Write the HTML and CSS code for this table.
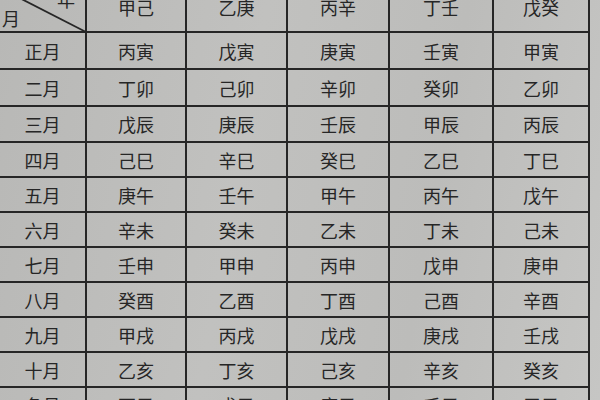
FILE: index.html
```html
<!DOCTYPE html>
<html lang="zh">
<head>
<meta charset="utf-8">
<link rel="stylesheet" href="styles.css">
</head>
<body>
<div class="paper">
  <div class="table">
    <div class="cell head corner">
      <svg class="diag" width="87" height="45" viewBox="0 0 87 45"><line x1="0" y1="0" x2="86" y2="44" stroke="#262626" stroke-width="1.8"/></svg>
      <span class="nian">年</span>
      <span class="yue">月</span>
    </div>
    <div class="cell head"><span>甲己</span></div>
    <div class="cell head"><span>乙庚</span></div>
    <div class="cell head"><span>丙辛</span></div>
    <div class="cell head"><span>丁壬</span></div>
    <div class="cell head"><span>戊癸</span></div>

    <div class="cell">正月</div><div class="cell">丙寅</div><div class="cell">戊寅</div><div class="cell">庚寅</div><div class="cell">壬寅</div><div class="cell">甲寅</div>
    <div class="cell">二月</div><div class="cell">丁卯</div><div class="cell">己卯</div><div class="cell">辛卯</div><div class="cell">癸卯</div><div class="cell">乙卯</div>
    <div class="cell">三月</div><div class="cell">戊辰</div><div class="cell">庚辰</div><div class="cell">壬辰</div><div class="cell">甲辰</div><div class="cell">丙辰</div>
    <div class="cell">四月</div><div class="cell">己巳</div><div class="cell">辛巳</div><div class="cell">癸巳</div><div class="cell">乙巳</div><div class="cell">丁巳</div>
    <div class="cell">五月</div><div class="cell">庚午</div><div class="cell">壬午</div><div class="cell">甲午</div><div class="cell">丙午</div><div class="cell">戊午</div>
    <div class="cell">六月</div><div class="cell">辛未</div><div class="cell">癸未</div><div class="cell">乙未</div><div class="cell">丁未</div><div class="cell">己未</div>
    <div class="cell">七月</div><div class="cell">壬申</div><div class="cell">甲申</div><div class="cell">丙申</div><div class="cell">戊申</div><div class="cell">庚申</div>
    <div class="cell">八月</div><div class="cell">癸酉</div><div class="cell">乙酉</div><div class="cell">丁酉</div><div class="cell">己酉</div><div class="cell">辛酉</div>
    <div class="cell">九月</div><div class="cell">甲戌</div><div class="cell">丙戌</div><div class="cell">戊戌</div><div class="cell">庚戌</div><div class="cell">壬戌</div>
    <div class="cell">十月</div><div class="cell">乙亥</div><div class="cell">丁亥</div><div class="cell">己亥</div><div class="cell">辛亥</div><div class="cell">癸亥</div>
    <div class="cell">冬月</div><div class="cell">丙子</div><div class="cell">戊子</div><div class="cell">庚子</div><div class="cell">壬子</div><div class="cell">甲子</div>
  </div>
</div>
</body>
</html>
```

FILE: styles.css
```css
html, body {
  margin: 0;
  padding: 0;
  width: 600px;
  height: 400px;
  overflow: hidden;
}
body {
  background: linear-gradient(100deg, #b8b8b6 0%, #c1c1bf 40%, #bcbcba 70%, #c6c6c4 100%);
  font-family: "Noto Sans CJK SC", "Noto Sans CJK JP", sans-serif;
  color: #262626;
}
.paper {
  width: 600px;
  height: 400px;
  overflow: hidden;
}
.table {
  margin-top: -12px;
  display: grid;
  grid-template-columns: 87px 100px 101px 102px 104px 96px;
  grid-template-rows: 45px 37px 37px 36px repeat(9, 35px);
  width: 590px;
}
.cell {
  box-sizing: border-box;
  border-right: 2px solid #262626;
  border-bottom: 2px solid #262626;
  display: flex;
  align-items: center;
  justify-content: center;
  font-size: 18px;
  line-height: 18px;
}
.head {
  align-items: flex-start;
  padding-top: 10px;
}
.corner {
  position: relative;
  padding: 0;
}
.diag {
  position: absolute;
  left: 0;
  top: 0;
}
.nian {
  position: absolute;
  left: 57px;
  top: 2px;
}
.yue {
  position: absolute;
  left: 2px;
  top: 21px;
}
```
